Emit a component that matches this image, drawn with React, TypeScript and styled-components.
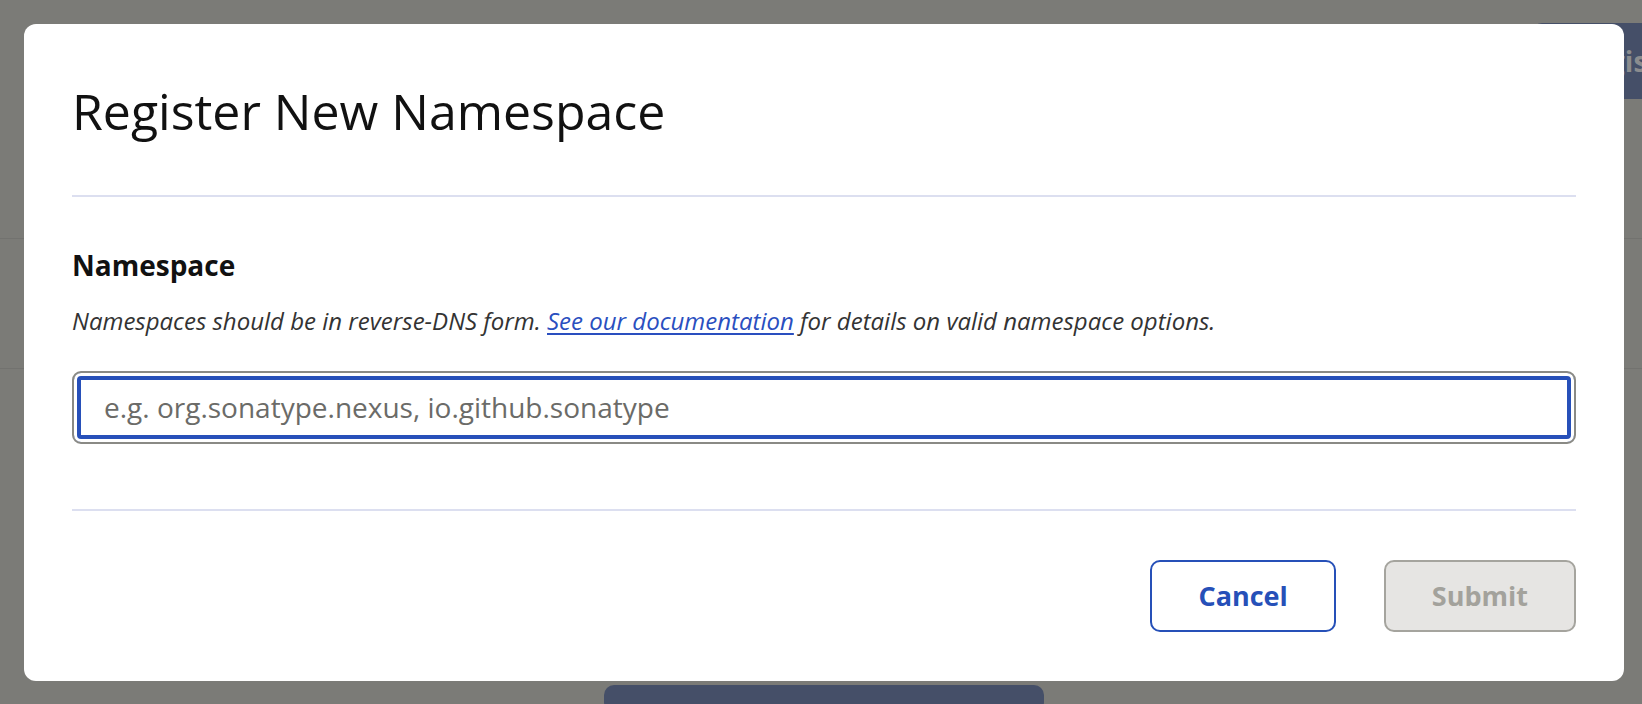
import React from 'react'
import styled, { createGlobalStyle } from 'styled-components'

const GlobalStyle = createGlobalStyle`
    html, body {
        margin: 0;
        padding: 0;
        width: 1642px;
        height: 704px;
        overflow: hidden;
        font-family: 'Open Sans', 'Noto Sans', sans-serif;
    }
    * {
        box-sizing: border-box;
    }
`

// the page behind the dialog, already dimmed by the backdrop
const Page = styled.div`
    position: relative;
    width: 1642px;
    height: 704px;
    overflow: hidden;
    background: #7b7b77;
    display: flex;
    flex-direction: column;
`

const PageHeader = styled.div`
    display: flex;
    justify-content: flex-end;
    padding-top: 23px;
    height: 239px;
    border-bottom: 1px solid #72726f;
`

const HeaderButton = styled.div`
    width: 260px;
    height: 76px;
    margin-right: -150px;
    padding-left: 42px;
    display: flex;
    align-items: center;
    background: #454f68;
    border-radius: 10px;
    color: #8b8c8e;
    font-size: 28px;
    font-weight: 700;
    white-space: nowrap;
`

const PageSection = styled.div`
    height: 130px;
    border-bottom: 1px solid #72726f;
`

const PageFooter = styled.div`
    flex: 1;
    display: flex;
    align-items: flex-end;
    padding-left: 604px;
`

const FooterButton = styled.div`
    width: 440px;
    height: 27px;
    margin-bottom: -8px;
    background: #454f68;
    border-radius: 10px;
`

const Dialog = styled.div`
    position: absolute;
    top: 24px;
    left: 24px;
    width: 1600px;
    height: 657px;
    background: #ffffff;
    border-radius: 12px;
    padding: 0 48px;
    display: flex;
    flex-direction: column;
`

const DialogHeader = styled.header`
    padding: 57px 0 54px;
    border-bottom: 2px solid #dcdff0;
`

const Title = styled.h2`
    margin: 0;
    font-size: 50px;
    font-weight: 400;
    line-height: 60px;
    color: #111111;
`

const DialogBody = styled.div`
    padding: 52px 0 65px;
    border-bottom: 2px solid #dcdff0;
    display: flex;
    flex-direction: column;
`

const Label = styled.label`
    font-size: 28px;
    font-weight: 700;
    line-height: 1.2;
    color: #111111;
`

const Hint = styled.p`
    margin: 20px 0 32px;
    font-size: 24px;
    font-style: italic;
    line-height: 36px;
    color: #333333;
`

const Link = styled.a`
    color: #2a4fbf;
    text-decoration: underline;
    text-underline-offset: 3px;
`

const TextInput = styled.input`
    width: 100%;
    height: 73px;
    padding: 0 30px;
    border: 2px solid #8a8a85;
    border-radius: 9px;
    box-shadow: inset 0 0 0 3px #ffffff, inset 0 0 0 7px #2750b9;
    font-family: 'Open Sans', 'Noto Sans', sans-serif;
    font-size: 28px;
    color: #222;
    outline: none;
    background: #fff;

    &::placeholder {
        color: #6b6b68;
    }
`

const DialogFooter = styled.footer`
    padding-top: 49px;
    display: flex;
    justify-content: flex-end;
    gap: 48px;
`

const Button = styled.button<{ $variant: 'secondary' | 'disabled' }>`
    height: 72px;
    padding: 0 46px;
    border-radius: 10px;
    font-family: 'Open Sans', 'Noto Sans', sans-serif;
    font-size: 27px;
    font-weight: 700;
    border: 2px solid ${(p) => (p.$variant === 'disabled' ? '#a5a49e' : '#2650b8')};
    background: ${(p) => (p.$variant === 'disabled' ? '#e6e5e3' : '#ffffff')};
    color: ${(p) => (p.$variant === 'disabled' ? '#a3a29c' : '#2650b8')};
    cursor: ${(p) => (p.$variant === 'disabled' ? 'default' : 'pointer')};
`

const App: React.FC = () => {
    return (
        <>
            <GlobalStyle />
            <Page>
                <PageHeader>
                    <HeaderButton>Register Namespace</HeaderButton>
                </PageHeader>
                <PageSection />
                <PageFooter>
                    <FooterButton />
                </PageFooter>

                <Dialog role="dialog" aria-modal="true">
                    <DialogHeader>
                        <Title>Register New Namespace</Title>
                    </DialogHeader>
                    <DialogBody>
                        <Label htmlFor="namespace">Namespace</Label>
                        <Hint>
                            Namespaces should be in reverse-DNS form.{' '}
                            <Link href="#">See our documentation</Link> for
                            details on valid namespace options.
                        </Hint>
                        <TextInput
                            id="namespace"
                            placeholder="e.g. org.sonatype.nexus, io.github.sonatype"
                        />
                    </DialogBody>
                    <DialogFooter>
                        <Button $variant="secondary">Cancel</Button>
                        <Button $variant="disabled" disabled>
                            Submit
                        </Button>
                    </DialogFooter>
                </Dialog>
            </Page>
        </>
    )
}

export default App
